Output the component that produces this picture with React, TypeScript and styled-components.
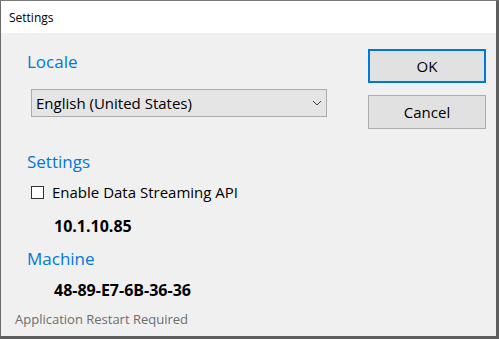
import styled, { createGlobalStyle } from 'styled-components';

const FONT = `"Segoe UI", "Open Sans", "Noto Sans", sans-serif`;

const GlobalStyle = createGlobalStyle`
  html, body {
    margin: 0;
    padding: 0;
    background: #f0f0f0;
  }
  body {
    font-family: ${FONT};
    color: #000;
  }
`;

const Window = styled.div`
  width: 499px;
  height: 339px;
  box-sizing: border-box;
  display: flex;
  flex-direction: column;
  background: #f0f0f0;
  border-top: 1px solid #7a7a7a;
  border-left: 1px solid #6a6a6a;
  border-right: 3px solid #5e5e5e;
  border-bottom: 3px solid #5e5e5e;
`;

const TitleBar = styled.div`
  height: 32px;
  flex-shrink: 0;
  background: #fff;
  display: flex;
  align-items: center;
  padding-left: 8px;
  font-size: 12px;
  color: #000;
`;

const Body = styled.div`
  flex: 1;
  display: flex;
  flex-direction: column;
`;

const Main = styled.div`
  display: grid;
  grid-template-columns: 1fr 118px;
  column-gap: 16px;
  padding: 0 10px 0 26px;
`;

const LeftColumn = styled.div`
  display: flex;
  flex-direction: column;
  padding-top: 18px;
`;

const Heading = styled.div<{ $gap?: number }>`
  font-size: 17px;
  line-height: 22px;
  color: #0078d7;
  margin-top: ${({ $gap }) => $gap ?? 0}px;
`;

const Select = styled.div`
  margin: 16px 0 0 4px;
  width: 296px;
  height: 28px;
  box-sizing: border-box;
  border: 1px solid #acacac;
  background: #e5e5e5;
  display: flex;
  align-items: center;
  justify-content: space-between;
  padding: 0 4px 0 4px;
  font-size: 15px;
`;

const CheckRow = styled.label`
  margin: 9px 0 0 4px;
  display: flex;
  align-items: center;
  gap: 8px;
  height: 20px;
  font-size: 15px;
  line-height: 20px;
`;

const CheckBox = styled.span`
  width: 13px;
  height: 13px;
  box-sizing: border-box;
  border: 1px solid #333;
  background: #fff;
`;

const Value = styled.div<{ $gap: number }>`
  margin: ${({ $gap }) => $gap}px 0 0 27px;
  font-size: 16px;
  line-height: 20px;
  font-weight: 700;
`;

const ButtonColumn = styled.div`
  display: flex;
  flex-direction: column;
  gap: 12px;
  padding-top: 16px;
`;

const Button = styled.button<{ $primary?: boolean }>`
  height: 34px;
  box-sizing: border-box;
  background: #e1e1e1;
  border: ${({ $primary }) => ($primary ? '2px solid #0078d7' : '1px solid #adadad')};
  font-family: ${FONT};
  font-size: 15px;
  color: #000;
  padding: 0;
`;

const Footer = styled.div`
  margin-top: 11px;
  padding-left: 14px;
  font-size: 13px;
  line-height: 17px;
  color: #6d6d6d;
`;

const Chevron = () => (
  <svg width="10" height="6" viewBox="0 0 10 6">
    <path d="M1 1 L5 5 L9 1" fill="none" stroke="#444" strokeWidth="1" />
  </svg>
);

export default function App() {
  return (
    <>
      <GlobalStyle />
      <Window>
        <TitleBar>Settings</TitleBar>
        <Body>
          <Main>
            <LeftColumn>
              <Heading>Locale</Heading>
              <Select>
                <span>English (United States)</span>
                <Chevron />
              </Select>
              <Heading $gap={34}>Settings</Heading>
              <CheckRow>
                <CheckBox />
                Enable Data Streaming API
              </CheckRow>
              <Value $gap={14}>10.1.10.85</Value>
              <Heading $gap={12}>Machine</Heading>
              <Value $gap={10}>48-89-E7-6B-36-36</Value>
            </LeftColumn>
            <ButtonColumn>
              <Button $primary>OK</Button>
              <Button>Cancel</Button>
            </ButtonColumn>
          </Main>
          <Footer>Application Restart Required</Footer>
        </Body>
      </Window>
    </>
  );
}
